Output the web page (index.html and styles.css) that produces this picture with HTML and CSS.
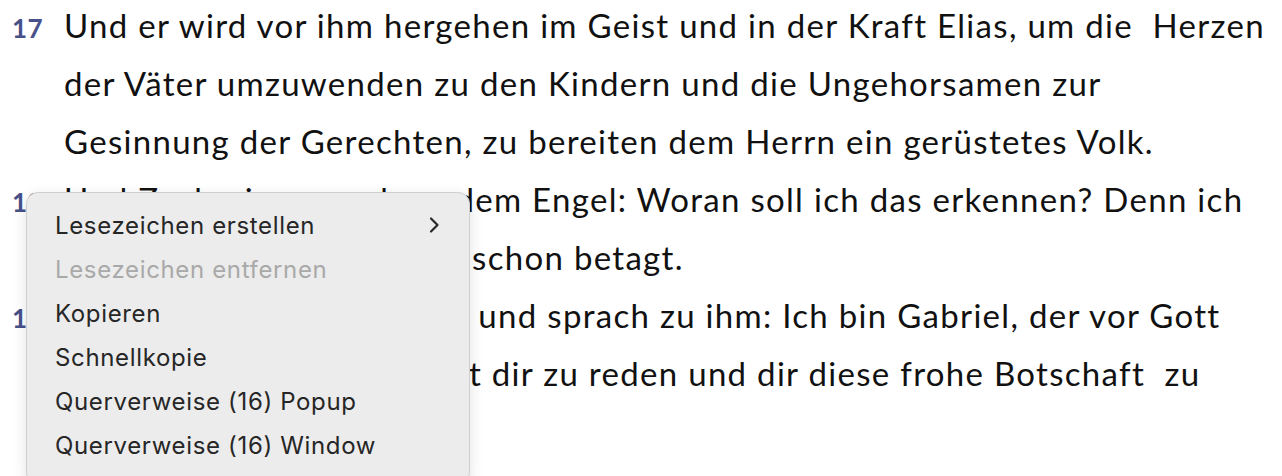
FILE: index.html
```html
<!DOCTYPE html>
<html lang="de">
<head>
<meta charset="utf-8">
<title>Lukas 1</title>
<link rel="stylesheet" href="styles.css">
</head>
<body>
<main class="reader">
  <div class="verse">
    <span class="num">17</span>
    <div class="lines">
      <span class="line">Und er wird vor ihm hergehen im Geist und in der Kraft Elias, um die &nbsp;Herzen</span>
      <span class="line">der Väter umzuwenden zu den Kindern und die Ungehorsamen zur</span>
      <span class="line">Gesinnung der Gerechten, zu bereiten dem Herrn ein gerüstetes Volk.</span>
    </div>
  </div>
  <div class="verse">
    <span class="num">18</span>
    <div class="lines">
      <span class="line">Und Zacharias sprach zu dem Engel: Woran soll ich das erkennen? Denn ich</span>
      <span class="line">bin alt und meine Frau ist schon betagt.</span>
    </div>
  </div>
  <div class="verse">
    <span class="num">19</span>
    <div class="lines">
      <span class="line">Und der Engel antwortete und sprach zu ihm: Ich bin Gabriel, der vor Gott</span>
      <span class="line">steht, und bin gesandt, mit dir zu reden und dir diese frohe Botschaft &nbsp;zu</span>
      <span class="line">verkündigen.</span>
    </div>
  </div>
  <div class="verse">
    <span class="num">20</span>
    <div class="lines">
      <span class="line">Und siehe, du wirst stumm sein und nicht reden können bis zu dem Tag, an dem</span>
    </div>
  </div>
</main>

<div class="menu" role="menu">
  <div class="item has-sub" role="menuitem">
    <span>Lesezeichen erstellen</span>
    <svg class="chev" width="12" height="18" viewBox="0 0 12 18"><path d="M3 2.5 L9.5 9 L3 15.5" fill="none" stroke="#2a2a2a" stroke-width="2.2" stroke-linecap="round" stroke-linejoin="round"/></svg>
  </div>
  <div class="item disabled" role="menuitem">Lesezeichen entfernen</div>
  <div class="item" role="menuitem">Kopieren</div>
  <div class="item" role="menuitem">Schnellkopie</div>
  <div class="item" role="menuitem">Querverweise (16) Popup</div>
  <div class="item" role="menuitem">Querverweise (16) Window</div>
</div>
</body>
</html>
```
FILE: styles.css
```css
html, body {
  margin: 0;
  padding: 0;
  background: #ffffff;
  overflow: hidden;
}

.reader {
  padding-left: 9px;
  margin-top: -4px;
  font-family: "Lato", "Open Sans", sans-serif;
  font-size: 33px;
  line-height: 58px;
  letter-spacing: 1.3px;
  color: #111111;
}

.verse {
  display: grid;
  grid-template-columns: 55px auto;
  align-items: baseline;
}

.num {
  font-size: 26px;
  font-weight: 700;
  letter-spacing: 0.5px;
  color: #48508a;
  padding-left: 3px;
}

.lines {
  display: flex;
  flex-direction: column;
}

.line {
  white-space: nowrap;
}

.menu {
  position: absolute;
  left: 26px;
  top: 192px;
  width: 442px;
  height: 271px;
  padding: 10px 0 9px;
  background: #ececec;
  border: 1px solid #cfcfcf;
  border-radius: 12px;
  box-shadow: 0 4px 14px rgba(0, 0, 0, 0.12);
  font-family: "Inter", "Liberation Sans", sans-serif;
  font-size: 24px;
  letter-spacing: 0.65px;
  color: #262626;
}

.item {
  height: 44px;
  display: flex;
  align-items: center;
  justify-content: space-between;
  padding: 0 29px 0 28px;
}

.item.disabled {
  color: #a9a9a9;
}

.chev {
  display: block;
}
```
